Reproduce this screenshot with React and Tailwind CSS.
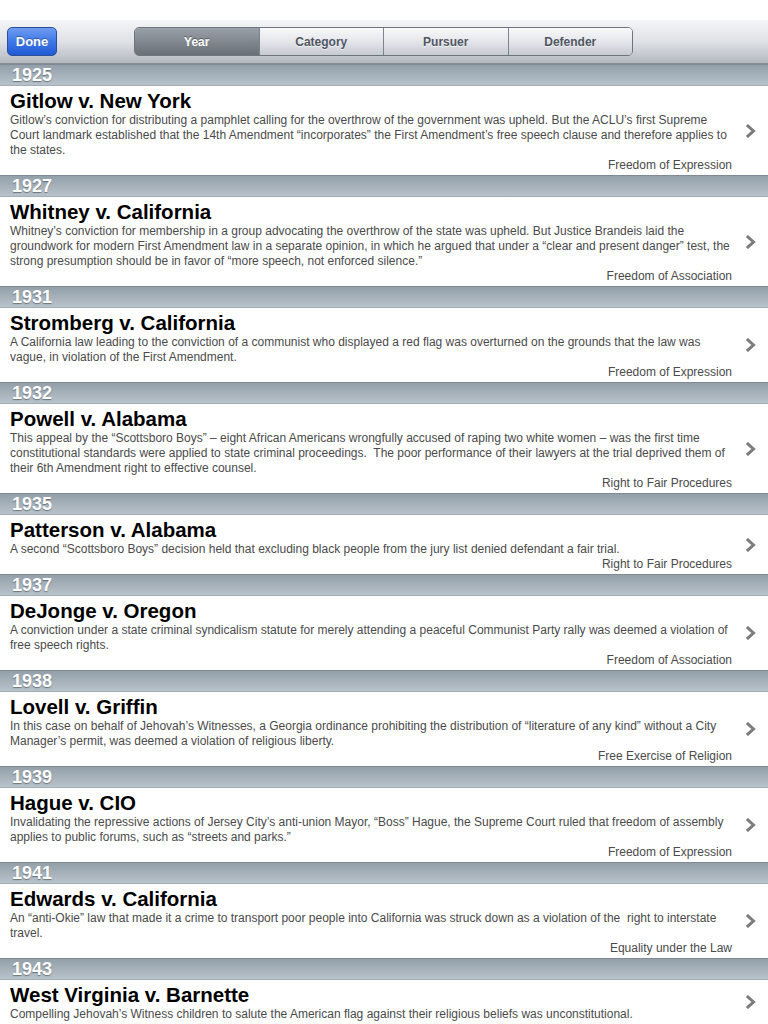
import React from 'react';

const cases = [
    {
        year: '1925',
        title: 'Gitlow v. New York',
        lines: [
            'Gitlow’s conviction for distributing a pamphlet calling for the overthrow of the government was upheld. But the ACLU’s first Supreme',
            'Court landmark established that the 14th Amendment “incorporates” the First Amendment’s free speech clause and therefore applies to',
            'the states.',
        ],
        category: 'Freedom of Expression',
    },
    {
        year: '1927',
        title: 'Whitney v. California',
        lines: [
            'Whitney’s conviction for membership in a group advocating the overthrow of the state was upheld. But Justice Brandeis laid the',
            'groundwork for modern First Amendment law in a separate opinion, in which he argued that under a “clear and present danger” test, the',
            'strong presumption should be in favor of “more speech, not enforced silence.”',
        ],
        category: 'Freedom of Association',
    },
    {
        year: '1931',
        title: 'Stromberg v. California',
        lines: [
            'A California law leading to the conviction of a communist who displayed a red flag was overturned on the grounds that the law was',
            'vague, in violation of the First Amendment.',
        ],
        category: 'Freedom of Expression',
    },
    {
        year: '1932',
        title: 'Powell v. Alabama',
        lines: [
            'This appeal by the “Scottsboro Boys” – eight African Americans wrongfully accused of raping two white women – was the first time',
            'constitutional standards were applied to state criminal proceedings.  The poor performance of their lawyers at the trial deprived them of',
            'their 6th Amendment right to effective counsel.',
        ],
        category: 'Right to Fair Procedures',
    },
    {
        year: '1935',
        title: 'Patterson v. Alabama',
        lines: [
            'A second “Scottsboro Boys” decision held that excluding black people from the jury list denied defendant a fair trial.',
        ],
        category: 'Right to Fair Procedures',
    },
    {
        year: '1937',
        title: 'DeJonge v. Oregon',
        lines: [
            'A conviction under a state criminal syndicalism statute for merely attending a peaceful Communist Party rally was deemed a violation of',
            'free speech rights.',
        ],
        category: 'Freedom of Association',
    },
    {
        year: '1938',
        title: 'Lovell v. Griffin',
        lines: [
            'In this case on behalf of Jehovah’s Witnesses, a Georgia ordinance prohibiting the distribution of “literature of any kind” without a City',
            'Manager’s permit, was deemed a violation of religious liberty.',
        ],
        category: 'Free Exercise of Religion',
    },
    {
        year: '1939',
        title: 'Hague v. CIO',
        lines: [
            'Invalidating the repressive actions of Jersey City’s anti-union Mayor, “Boss” Hague, the Supreme Court ruled that freedom of assembly',
            'applies to public forums, such as “streets and parks.”',
        ],
        category: 'Freedom of Expression',
    },
    {
        year: '1941',
        title: 'Edwards v. California',
        lines: [
            'An “anti-Okie” law that made it a crime to transport poor people into California was struck down as a violation of the  right to interstate',
            'travel.',
        ],
        category: 'Equality under the Law',
    },
    {
        year: '1943',
        title: 'West Virginia v. Barnette',
        lines: [
            'Compelling Jehovah’s Witness children to salute the American flag against their religious beliefs was unconstitutional.',
        ],
        category: null,
    },
];

const segments = ['Year', 'Category', 'Pursuer', 'Defender'];

function Chevron() {
    return (
        <svg width="10" height="14" viewBox="0 0 10 14">
            <path d="M2 2 L7.5 7 L2 12" fill="none" stroke="#7b7b7b" strokeWidth="3" strokeLinecap="square" strokeLinejoin="miter" />
        </svg>
    );
}

function Toolbar() {
    return (
        <div className="h-[44px] flex items-center bg-gradient-to-b from-[#f4f5f7] via-[#dfe2e6] to-[#b4b9c1] border-b border-[#878d95] px-[7px]">
            <button className="w-[50px] h-[29px] rounded-[5px] border border-[#2a4f97] bg-gradient-to-b from-[#6e9df0] via-[#3f78e6] to-[#1f5ad4] text-white text-[13px] font-bold [text-shadow:0_-1px_0_rgba(0,0,0,0.35)]">
                Done
            </button>
            <div className="ml-[77px] flex h-[29px] w-[499px] rounded-[5px] border border-[#6f757d] overflow-hidden">
                {segments.map((s, i) => (
                    <div
                        key={s}
                        className={
                            i === 0
                                ? 'flex-1 flex items-center justify-center text-[12px] font-bold text-white bg-gradient-to-b from-[#9aa0a7] to-[#6a7078] [text-shadow:0_-1px_0_rgba(0,0,0,0.4)]'
                                : 'flex-1 flex items-center justify-center text-[12px] font-bold text-[#4f5662] bg-gradient-to-b from-[#f8f9fa] via-[#e4e6ea] to-[#c6cad1] border-l border-[#7e848c] [text-shadow:0_1px_0_rgba(255,255,255,0.7)]'
                        }
                    >
                        {s}
                    </div>
                ))}
            </div>
        </div>
    );
}

function SectionHeader({ year }) {
    return (
        <div className="h-[22px] flex items-center px-[12px] border-t border-[#7f8a94] border-b border-b-[#a3adb5] bg-gradient-to-b from-[#93a0aa] to-[#b8c2ca]">
            <span className="text-[18px] font-bold text-white leading-none [text-shadow:0_1px_1px_rgba(60,70,80,0.6)]">{year}</span>
        </div>
    );
}

function CaseRow({ item }) {
    return (
        <div className="flex items-center bg-white">
            <div className="flex-1 pl-[10px] pt-[3px] pb-[2px]">
                <div className="h-[24px] text-[20.5px] leading-[24px] font-bold text-black">{item.title}</div>
                {item.lines.map((line, i) => (
                    <div key={i} className="h-[15px] text-[12px] leading-[15px] text-[#4a4a4a] whitespace-pre">
                        {line}
                    </div>
                ))}
                {item.category && (
                    <div className="h-[15px] text-[12px] leading-[15px] text-[#4a4a4a] text-right pr-[5px]">{item.category}</div>
                )}
            </div>
            <div className="w-[31px] flex justify-center pr-[4px]">
                <Chevron />
            </div>
        </div>
    );
}

export default function App() {
    return (
        <div className="w-[768px] h-[1024px] overflow-hidden bg-white font-['Liberation_Sans',Arial,sans-serif]">
            <div className="h-[20px] bg-white" />
            <Toolbar />
            {cases.map((c) => (
                <div key={c.year}>
                    <SectionHeader year={c.year} />
                    <CaseRow item={c} />
                </div>
            ))}
        </div>
    );
}
